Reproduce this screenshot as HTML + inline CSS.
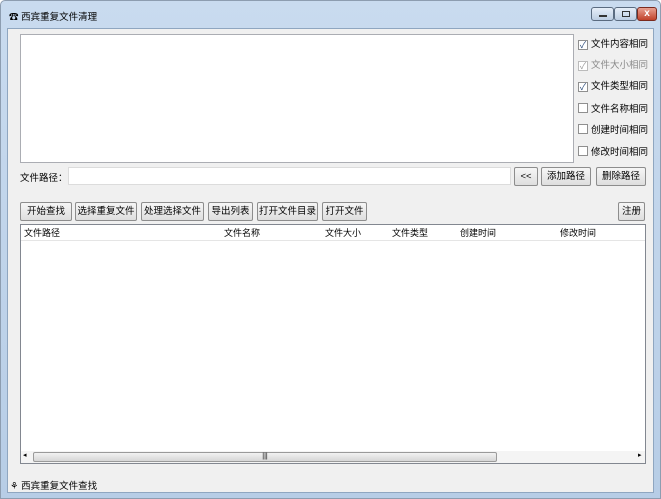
<!DOCTYPE html><html><head><meta charset="utf-8"><style>
*{box-sizing:border-box;margin:0;padding:0}
body{width:661px;height:499px;overflow:hidden;font-family:"Liberation Sans","Noto Sans CJK SC",sans-serif;font-size:9.5px;color:#000;background:#fff;position:relative;white-space:nowrap}
.a{position:absolute}
.win{left:0;top:0;width:661px;height:499px;background:linear-gradient(#c9dbef,#b7cde6);border:1px solid #8d9db0;border-radius:5px 5px 0 0}
.client{left:7px;top:28px;width:647px;height:465px;background:#f0f0f0;border:1px solid #8fa6c0}
.btn{position:absolute;height:19px;border:1px solid #8d8d8d;border-radius:2px;background:linear-gradient(#f6f6f6,#dedede);text-align:center;line-height:17px;font-size:9.5px;white-space:nowrap;overflow:hidden}
.cb{position:absolute;left:578px;font-size:9.5px;line-height:12px}
.cb i{display:inline-block;width:10px;height:10px;border:1px solid #8f8f8f;background:#fff;vertical-align:-1px;margin-right:3px;font-style:normal;font-size:9px;line-height:8px;text-align:center;color:#2a4a7a}
.wb{position:absolute;top:7px;height:14px;border:1px solid #5a6b80;border-radius:3px;background:linear-gradient(#e6eef8,#bccde2)}
</style></head><body>
<div class="a win"></div>
<div class="a" style="left:9px;top:9px">☎ 西宾重复文件清理</div>
<div class="wb" style="left:591px;width:23px"><div class="a" style="left:7px;top:7px;width:8px;height:2px;background:#333"></div></div>
<div class="wb" style="left:614px;width:23px"><div class="a" style="left:7px;top:3px;width:8px;height:6px;border:1px solid #333"></div></div>
<div class="wb" style="left:637px;width:20px;background:linear-gradient(#e8a090,#c0412a);border-color:#7a2a1e;color:#fff;font-size:10px;text-align:center;line-height:12px;font-weight:bold">x</div>
<div class="a client"></div>
<div class="a" style="left:20px;top:34px;width:554px;height:129px;background:#fff;border:1px solid #abadb3"></div>
<div class="cb" style="top:39px"><i>✓</i>文件内容相同</div>
<div class="cb" style="top:60px;color:#8a8a8a"><i style="border-color:#bbb;color:#999">✓</i>文件大小相同</div>
<div class="cb" style="top:81px"><i>✓</i>文件类型相同</div>
<div class="cb" style="top:103px"><i></i>文件名称相同</div>
<div class="cb" style="top:124px"><i></i>创建时间相同</div>
<div class="cb" style="top:146px"><i></i>修改时间相同</div>
<div class="a" style="left:20px;top:170px">文件路径：</div>
<div class="a" style="left:68px;top:167px;width:443px;height:18px;background:#fff;border:1px solid #dcdcdc"></div>
<div class="btn" style="left:514px;top:167px;width:24px">&lt;&lt;</div>
<div class="btn" style="left:541px;top:167px;width:50px">添加路径</div>
<div class="btn" style="left:596px;top:167px;width:50px">删除路径</div>
<div class="btn" style="left:20px;top:202px;width:52px">开始查找</div>
<div class="btn" style="left:75px;top:202px;width:62px">选择重复文件</div>
<div class="btn" style="left:141px;top:202px;width:63px">处理选择文件</div>
<div class="btn" style="left:208px;top:202px;width:45px">导出列表</div>
<div class="btn" style="left:257px;top:202px;width:61px">打开文件目录</div>
<div class="btn" style="left:322px;top:202px;width:45px">打开文件</div>
<div class="btn" style="left:618px;top:202px;width:27px">注册</div>
<div class="a" style="left:20px;top:224px;width:626px;height:240px;background:#fff;border:1px solid #828790"></div>
<div class="a" style="left:21px;top:225px;width:624px;height:16px;border-bottom:1px solid #e5e5e5;font-size:9px;line-height:16px">
<span class="a" style="left:3px">文件路径</span><span class="a" style="left:203px">文件名称</span><span class="a" style="left:304px">文件大小</span><span class="a" style="left:371px">文件类型</span><span class="a" style="left:439px">创建时间</span><span class="a" style="left:539px">修改时间</span></div>
<div class="a" style="left:21px;top:451px;width:624px;height:12px;background:#f4f4f4"></div>
<div class="a" style="left:33px;top:452px;width:464px;height:10px;background:linear-gradient(#f2f2f2,#d6d6d6);border:1px solid #9a9a9a;border-radius:2px;font-size:7px;text-align:center;line-height:8px">|||</div>
<div class="a" style="left:23px;top:451px;font-size:7px">◂</div>
<div class="a" style="left:638px;top:451px;font-size:7px">▸</div>
<div class="a" style="left:10px;top:478px">⚘ 西宾重复文件查找</div>
</body></html>
